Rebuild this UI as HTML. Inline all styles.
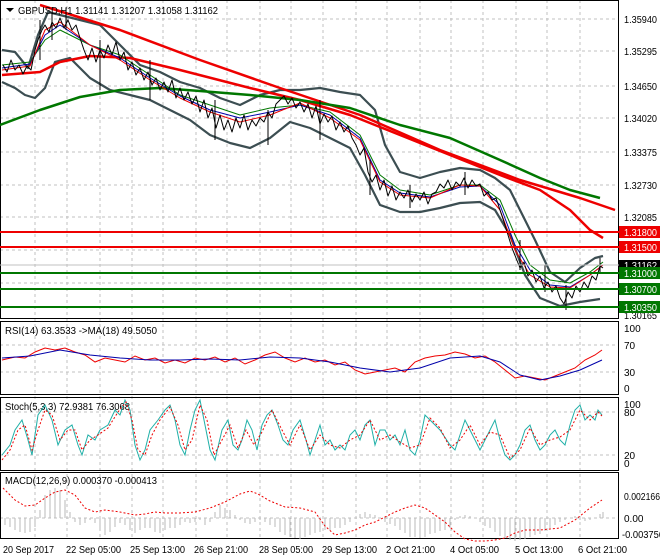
<!DOCTYPE html>
<html><head><meta charset="utf-8"><style>
body{margin:0;background:#fff;}
svg{display:block;font-family:"Liberation Sans",sans-serif;font-size:10px;}
</style></head><body>
<svg width="660" height="560" viewBox="0 0 660 560" xmlns="http://www.w3.org/2000/svg">
<rect width="660" height="560" fill="#fff"/>
<g stroke="#c0c0c0" stroke-dasharray="3,3" stroke-width="1">
<line x1="35" y1="0" x2="35" y2="538"/><line x1="67" y1="0" x2="67" y2="538"/><line x1="100" y1="0" x2="100" y2="538"/><line x1="132" y1="0" x2="132" y2="538"/><line x1="163" y1="0" x2="163" y2="538"/><line x1="196" y1="0" x2="196" y2="538"/><line x1="227" y1="0" x2="227" y2="538"/><line x1="260" y1="0" x2="260" y2="538"/><line x1="291" y1="0" x2="291" y2="538"/><line x1="323" y1="0" x2="323" y2="538"/><line x1="356" y1="0" x2="356" y2="538"/><line x1="387" y1="0" x2="387" y2="538"/><line x1="420" y1="0" x2="420" y2="538"/><line x1="451" y1="0" x2="451" y2="538"/><line x1="483" y1="0" x2="483" y2="538"/><line x1="516" y1="0" x2="516" y2="538"/><line x1="547" y1="0" x2="547" y2="538"/><line x1="580" y1="0" x2="580" y2="538"/>
<line x1="0" y1="19" x2="619" y2="19"/><line x1="0" y1="51" x2="619" y2="51"/><line x1="0" y1="86" x2="619" y2="86"/><line x1="0" y1="118" x2="619" y2="118"/><line x1="0" y1="152" x2="619" y2="152"/><line x1="0" y1="185" x2="619" y2="185"/><line x1="0" y1="217" x2="619" y2="217"/><line x1="0" y1="250" x2="619" y2="250"/><line x1="0" y1="283" x2="619" y2="283"/>
<line x1="0" y1="345" x2="619" y2="345"/><line x1="0" y1="372" x2="619" y2="372"/>
<line x1="0" y1="412" x2="619" y2="412"/><line x1="0" y1="455" x2="619" y2="455"/>
<line x1="0" y1="518" x2="619" y2="518"/>
</g>
<g fill="none" stroke="#000" stroke-width="1">
<rect x="0.5" y="0.5" width="618" height="318"/>
<rect x="0.5" y="321.5" width="618" height="73"/>
<rect x="0.5" y="397.5" width="618" height="73"/>
<rect x="0.5" y="472.5" width="618" height="66"/>
</g>
<g fill="none" stroke-linejoin="round">
<polyline stroke="#3c4e52" stroke-width="2.2" points="2,50 15,52 28,68 38,35 48,12 60,15 80,20 100,25 120,45 140,65 160,72 180,82 200,88 220,98 240,105 260,95 280,90 300,90 320,88 340,92 360,95 375,110 385,145 400,172 420,178 440,172 460,168 480,170 495,178 510,190 520,210 535,240 550,272 565,282 580,268 595,258 603,256"/>
<polyline stroke="#3c4e52" stroke-width="2.2" points="2,82 15,88 25,95 35,98 45,88 55,62 70,58 90,78 110,90 130,95 150,100 170,110 190,120 210,135 230,143 250,148 270,138 290,122 310,128 330,138 350,148 365,175 380,205 400,212 420,212 440,208 460,203 480,202 495,210 510,235 525,275 540,298 560,306 580,302 600,299"/>
<polyline stroke="#e00" stroke-width="2.5" points="2,75 40,72 60,62 90,56 130,58 180,70 250,88 300,100 350,115 400,135 450,155 500,175 540,190 570,210 590,230 603,238"/>
<polyline stroke="#e00" stroke-width="2.5" points="40,5 120,30 200,60 280,88 360,115 440,150 520,180 580,198 615,210"/>
<polyline stroke="#070" stroke-width="2.5" points="0,125 40,110 80,97 120,90 160,88 200,91 250,95 300,100 350,108 400,125 450,138 500,160 540,178 570,190 600,198"/>
<polyline stroke="#070" stroke-width="1" points="2,65 30,62 45,40 60,30 90,45 120,55 150,75 180,95 210,105 240,115 270,108 300,105 330,112 360,135 380,175 400,190 430,195 460,185 480,185 500,200 515,235 530,265 550,280 570,283 590,272 603,262"/>
<polyline stroke="#00a" stroke-width="1" points="2,68 30,64 45,35 60,25 90,45 120,58 150,78 180,96 210,110 240,118 270,112 300,105 330,115 360,138 380,180 400,193 430,197 460,187 480,186 500,205 515,245 530,270 550,285 570,287 590,275 603,265"/>
<polyline stroke="#e00" stroke-width="1" points="2,70 30,66 45,30 60,22 90,45 120,60 150,80 180,98 210,112 240,122 270,115 300,103 330,118 360,140 380,182 400,195 430,198 460,185 480,186 500,210 515,250 530,275 550,287 570,288 590,275 603,265"/>
<polyline stroke="#000" stroke-width="1" points="3,65 7,72 11,60 15,70 19,65 23,74 27,66 31,70 35,50 38,40 42,30 45,25 49,32 52,22 56,28 60,18 64,28 68,20 72,30 76,25 80,38 84,50 88,60 92,48 96,62 100,50 104,58 108,45 112,55 116,42 120,60 124,52 128,70 132,62 136,75 140,68 144,80 148,72 152,85 156,78 160,90 164,82 168,92 172,80 176,98 180,88 184,100 188,92 192,104 196,96 200,112 204,100 208,118 212,108 216,128 220,115 224,130 228,120 232,132 236,118 240,128 244,115 248,130 252,120 256,126 260,118 264,122 268,112 272,118 276,104 280,100 284,96 288,104 292,98 296,108 300,102 304,112 308,104 312,118 316,106 320,124 324,114 328,122 332,116 336,130 340,122 344,132 348,126 352,138 356,145 360,155 364,148 368,172 372,182 376,175 380,190 384,180 388,196 392,186 396,200 400,192 404,198 408,190 412,202 416,194 420,200 424,192 428,204 432,194 436,192 440,184 444,188 448,180 452,190 456,182 460,186 464,178 468,188 472,180 476,186 480,184 484,196 488,192 492,200 496,198 500,210 504,222 508,235 512,248 516,258 520,268 524,262 528,276 532,270 536,282 540,276 544,288 548,282 552,292 556,286 560,298 564,304 568,292 572,298 576,286 580,292 584,282 588,288 592,276 596,280 600,266 603,268"/>
</g>
<g stroke="#000" stroke-width="1">
<line x1="40" y1="20" x2="40" y2="60"/><line x1="52" y1="12" x2="52" y2="40"/><line x1="66" y1="8" x2="66" y2="30"/><line x1="100" y1="40" x2="100" y2="90"/><line x1="150" y1="60" x2="150" y2="100"/><line x1="215" y1="100" x2="215" y2="140"/><line x1="268" y1="110" x2="268" y2="145"/><line x1="320" y1="100" x2="320" y2="140"/><line x1="370" y1="160" x2="370" y2="195"/><line x1="410" y1="185" x2="410" y2="208"/><line x1="465" y1="172" x2="465" y2="195"/><line x1="520" y1="240" x2="520" y2="270"/><line x1="545" y1="265" x2="545" y2="292"/><line x1="566" y1="285" x2="566" y2="310"/><line x1="600" y1="258" x2="600" y2="272"/>
</g>
<g stroke-width="2">
<line x1="0" y1="232" x2="619" y2="232" stroke="#e00"/><line x1="0" y1="247" x2="619" y2="247" stroke="#e00"/>
<line x1="0" y1="273" x2="619" y2="273" stroke="#070"/><line x1="0" y1="289" x2="619" y2="289" stroke="#070"/><line x1="0" y1="307" x2="619" y2="307" stroke="#070"/>
</g>
<line x1="0" y1="265" x2="619" y2="265" stroke="#c0c0c0"/>
<polygon points="6,8 14,8 10,12" fill="#000"/>
<text x="18" y="14" fill="#000" textLength="200" lengthAdjust="spacingAndGlyphs">GBPUSD,H1  1.31141 1.31207 1.31058 1.31162</text>
<g fill="#000" font-size="10">
<text x="624" y="23" textLength="33" lengthAdjust="spacingAndGlyphs">1.35940</text><text x="624" y="55" textLength="33" lengthAdjust="spacingAndGlyphs">1.35295</text><text x="624" y="90" textLength="33" lengthAdjust="spacingAndGlyphs">1.34650</text><text x="624" y="122" textLength="33" lengthAdjust="spacingAndGlyphs">1.34020</text><text x="624" y="156" textLength="33" lengthAdjust="spacingAndGlyphs">1.33375</text><text x="624" y="189" textLength="33" lengthAdjust="spacingAndGlyphs">1.32730</text><text x="624" y="221" textLength="33" lengthAdjust="spacingAndGlyphs">1.32085</text><text x="624" y="319" textLength="33" lengthAdjust="spacingAndGlyphs">1.30165</text>
</g>
<rect x="619" y="226" width="41" height="12" fill="#e00"/><text x="624" y="236" fill="#fff" textLength="33" lengthAdjust="spacingAndGlyphs">1.31800</text>
<rect x="619" y="241" width="41" height="12" fill="#e00"/><text x="624" y="251" fill="#fff" textLength="33" lengthAdjust="spacingAndGlyphs">1.31500</text>
<rect x="619" y="260" width="41" height="11" fill="#000"/><text x="624" y="269" fill="#fff" textLength="33" lengthAdjust="spacingAndGlyphs">1.31162</text>
<rect x="619" y="267" width="41" height="12" fill="#070"/><text x="624" y="277" fill="#fff" textLength="33" lengthAdjust="spacingAndGlyphs">1.31000</text>
<rect x="619" y="283" width="41" height="12" fill="#070"/><text x="624" y="293" fill="#fff" textLength="33" lengthAdjust="spacingAndGlyphs">1.30700</text>
<rect x="619" y="301" width="41" height="12" fill="#070"/><text x="624" y="311" fill="#fff" textLength="33" lengthAdjust="spacingAndGlyphs">1.30350</text>
<text x="5" y="334" textLength="152" lengthAdjust="spacingAndGlyphs">RSI(14) 63.3533  -&gt;MA(18) 49.5050</text>
<polyline fill="none" stroke="#e00" points="2,360 15,357 25,358 35,352 45,348 55,350 65,348 75,352 85,355 95,362 105,358 115,360 125,362 135,356 145,360 155,358 165,363 175,360 185,363 195,358 205,360 215,357 225,362 235,358 245,364 255,360 265,355 275,352 285,358 295,362 305,358 315,362 325,360 335,365 345,362 355,370 365,374 375,372 385,370 395,368 405,372 415,362 425,358 435,356 445,355 455,352 465,354 475,358 485,356 495,362 505,370 515,378 525,376 535,378 545,380 555,376 565,372 575,368 585,360 595,355 602,350"/>
<polyline fill="none" stroke="#00a" points="2,358 30,356 60,350 90,355 120,358 150,360 180,360 210,359 240,360 270,357 300,358 330,362 360,368 390,372 420,368 450,358 480,356 500,362 520,375 540,380 560,376 580,370 602,360"/>
<g fill="#000"><text x="624" y="332">100</text><text x="624" y="349">70</text><text x="624" y="376">30</text><text x="624" y="392">0</text></g>
<text x="5" y="410" textLength="125" lengthAdjust="spacingAndGlyphs">Stoch(5,3,3) 72.9381 76.3068</text>
<polyline fill="none" stroke="#20b0a8" points="2,455 10,445 15,430 22,420 28,440 32,455 38,415 45,405 52,420 58,445 65,430 72,425 78,445 82,455 88,435 95,440 100,430 108,425 115,410 120,415 125,400 130,410 135,445 140,460 145,450 150,430 158,420 165,410 170,405 175,420 180,445 185,455 190,430 195,410 200,400 205,425 210,450 215,460 222,430 228,420 233,445 238,450 242,440 247,420 252,430 257,450 262,425 267,415 272,410 278,425 283,440 288,445 293,430 300,420 306,440 310,455 315,440 320,425 325,445 330,440 335,450 340,445 345,450 350,435 355,430 360,440 365,425 370,420 375,445 380,430 385,430 390,440 395,435 400,445 405,430 410,450 415,455 420,440 425,415 430,420 440,430 450,445 455,450 460,435 465,420 470,430 480,450 485,440 490,430 495,420 500,440 505,455 510,460 515,455 520,445 525,430 530,425 535,440 540,450 545,445 550,435 555,430 560,440 565,445 570,425 575,410 580,405 585,420 590,415 595,420 598,410 602,415"/>
<polyline fill="none" stroke="#e00" stroke-dasharray="2,2" points="2,460 10,450 18,430 25,425 32,450 38,430 45,410 52,415 60,440 68,430 75,430 82,450 90,440 98,435 108,428 118,412 126,402 132,420 138,450 145,455 152,435 160,420 170,407 178,425 185,450 192,440 200,405 207,420 214,455 222,440 230,425 238,448 246,430 254,445 262,432 272,410 282,430 290,445 300,425 310,450 320,435 330,445 340,448 350,440 360,435 370,420 380,440 390,435 400,442 410,448 420,445 430,418 440,428 450,448 460,440 470,425 480,445 490,432 500,435 510,458 520,450 530,428 540,445 550,440 560,437 570,430 580,410 590,420 598,412 602,416"/>
<g fill="#000"><text x="624" y="408">100</text><text x="624" y="416">80</text><text x="624" y="459">20</text><text x="624" y="467">0</text></g>
<g stroke="#b8b8b8" stroke-width="1">
<path d="M5 518V525M10 518V527M15 518V530M20 518V532M25 518V533M30 518V532M35 518V527M40 518V510M45 518V495M50 518V490M55 518V488M60 518V490M65 518V500M70 518V512M75 518V522M80 518V525M85 518V523M90 518V520M95 518V523M100 518V530M105 518V535M110 518V532M115 518V527M120 518V523M125 518V525M130 518V530M135 518V533M140 518V530M145 518V528M150 518V528M155 518V532M160 518V533M165 518V530M170 518V528M175 518V528M180 518V525M185 518V522M190 518V523M195 518V522M200 518V520M205 518V525M210 518V522M215 518V512M220 518V505M225 518V508M230 518V510M235 518V515M240 518V520M245 518V523M250 518V524M255 518V522M260 518V520M265 518V522M270 518V525M275 518V527M280 518V532M285 518V535M290 518V537M295 518V538M300 518V539M305 518V537M310 518V535M315 518V533M320 518V532M325 518V530M330 518V530M335 518V528M340 518V528M345 518V525M350 518V522M355 518V518M360 518V514M365 518V512M370 518V514M375 518V515M380 518V518M385 518V522M390 518V524M395 518V526M400 518V530M405 518V533M410 518V537M415 518V537M420 518V538M425 518V537M430 518V534M435 518V533M440 518V531M445 518V530M450 518V528M455 518V520M460 518V516M465 518V515M470 518V516M475 518V518M480 518V522M485 518V526M490 518V528M495 518V532M500 518V536M505 518V538M510 518V540M515 518V541M520 518V540M525 518V539M530 518V537M535 518V535M540 518V534M545 518V531M550 518V528M555 518V525M560 518V522M565 518V520M570 518V518M575 518V516M580 518V520M585 518V521M590 518V520M595 518V518M600 518V514M603 518V512"/>
</g>
<polyline fill="none" stroke="#e00" stroke-dasharray="2,2" points="3,488 15,500 25,506 35,505 45,498 55,492 65,490 75,495 85,508 95,512 105,510 120,512 135,515 145,514 155,512 165,513 180,513 195,512 210,508 225,502 240,494 250,491 258,494 270,501 285,507 300,508 315,512 325,526 335,535 345,533 355,530 365,525 375,522 385,517 395,512 405,508 415,505 425,508 435,515 445,522 455,532 465,539 475,541 485,541 495,540 505,538 515,533 525,530 540,530 560,528 575,520 590,508 602,500"/>
<text x="5" y="484" textLength="152" lengthAdjust="spacingAndGlyphs">MACD(12,26,9) 0.000370 -0.000413</text>
<g fill="#000"><text x="624" y="500" textLength="36" lengthAdjust="spacingAndGlyphs">0.002166</text><text x="624" y="522">0.00</text><text x="622" y="538" textLength="42" lengthAdjust="spacingAndGlyphs">-0.003756</text></g>
<g fill="#000" lengthAdjust="spacingAndGlyphs">
<text x="3" y="553" textLength="51" lengthAdjust="spacingAndGlyphs">20 Sep 2017</text><text x="66" y="553" textLength="55" lengthAdjust="spacingAndGlyphs">22 Sep 05:00</text><text x="130" y="553" textLength="55" lengthAdjust="spacingAndGlyphs">25 Sep 13:00</text><text x="194" y="553" textLength="54" lengthAdjust="spacingAndGlyphs">26 Sep 21:00</text><text x="259" y="553" textLength="54" lengthAdjust="spacingAndGlyphs">28 Sep 05:00</text><text x="322" y="553" textLength="55" lengthAdjust="spacingAndGlyphs">29 Sep 13:00</text><text x="386" y="553" textLength="49" lengthAdjust="spacingAndGlyphs">2 Oct 21:00</text><text x="450" y="553" textLength="49" lengthAdjust="spacingAndGlyphs">4 Oct 05:00</text><text x="515" y="553" textLength="48" lengthAdjust="spacingAndGlyphs">5 Oct 13:00</text><text x="578" y="553" textLength="49" lengthAdjust="spacingAndGlyphs">6 Oct 21:00</text>
</g>
</svg>
</body></html>
